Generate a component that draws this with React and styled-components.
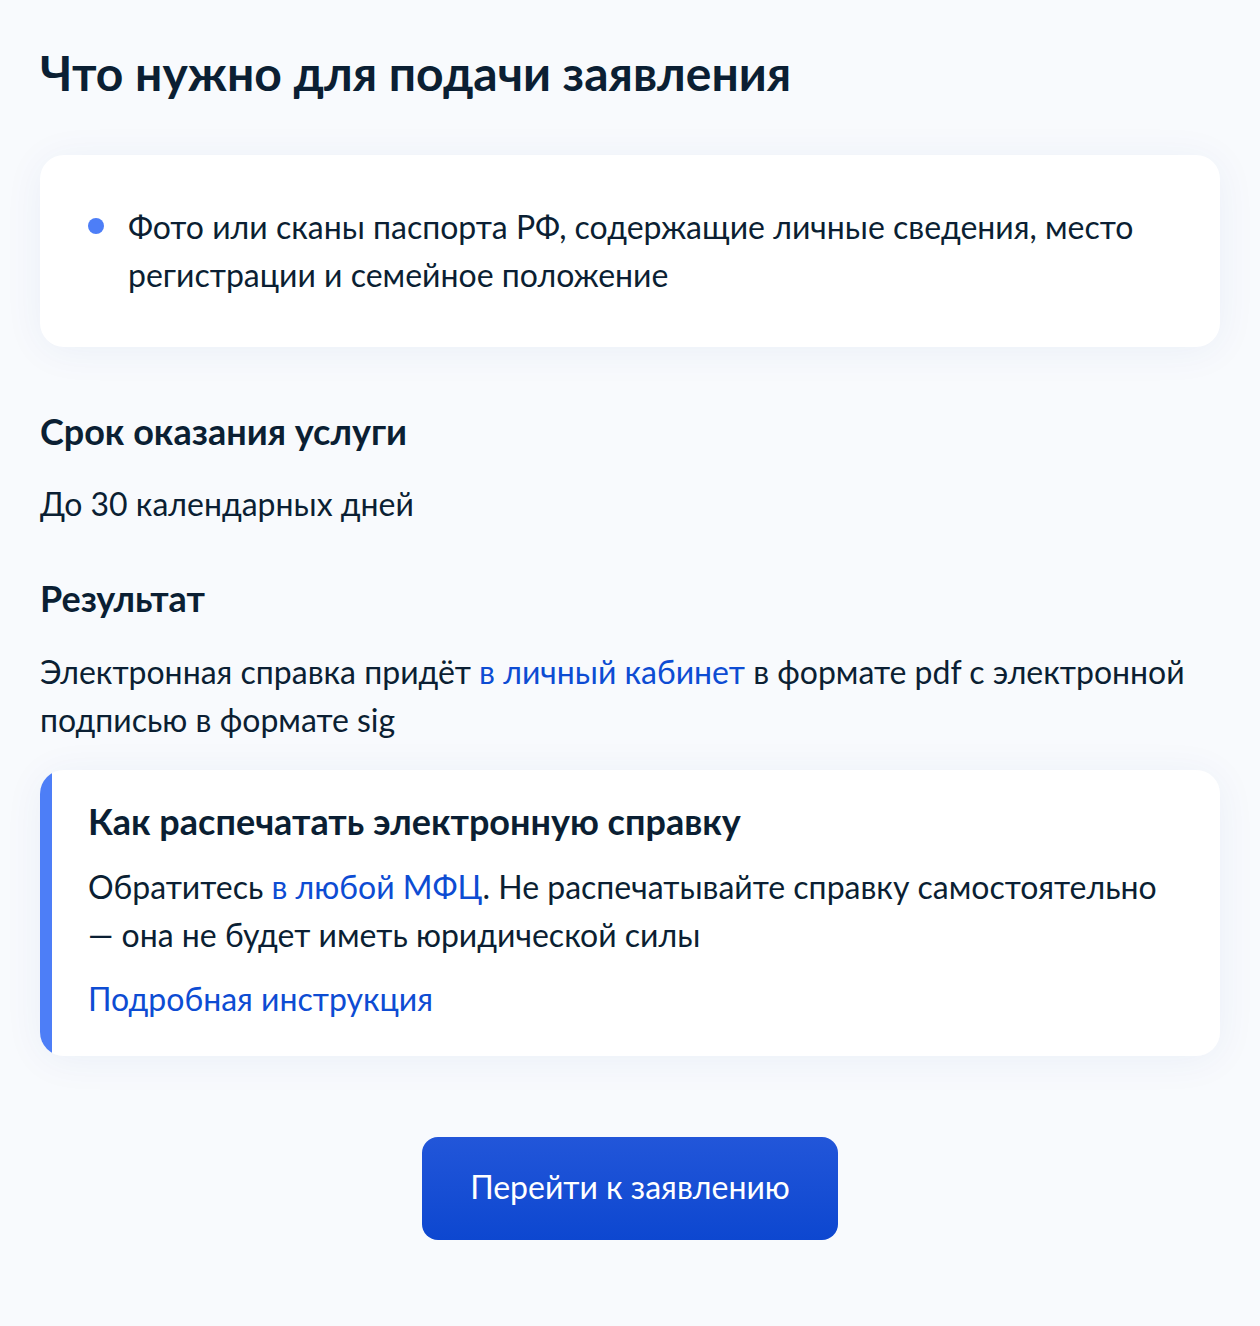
import styled, { createGlobalStyle } from "styled-components";

const GlobalStyle = createGlobalStyle`
  html, body {
    margin: 0;
    padding: 0;
    background: #f8fafd;
  }
  body {
    font-family: Lato, "Noto Sans", sans-serif;
    color: #0b1f33;
  }
`;

const Page = styled.main`
  width: 1260px;
  min-height: 1326px;
  box-sizing: border-box;
  padding: 45px 40px 86px;
  display: flex;
  flex-direction: column;
`;

const Title = styled.h1`
  margin: 0 0 54px;
  font-size: 48px;
  line-height: 56px;
  font-weight: 700;
`;

const Card = styled.section`
  background: #fff;
  border-radius: 24px;
  box-shadow: 0 4px 40px rgba(11, 64, 145, 0.06);
  padding: 48px;
`;

const List = styled.ul`
  margin: 0;
  padding: 0;
  list-style: none;
`;

const Item = styled.li`
  display: flex;
  gap: 24px;
  font-size: 32px;
  line-height: 48px;

  &::before {
    content: "";
    flex: 0 0 16px;
    height: 16px;
    margin-top: 15px;
    border-radius: 50%;
    background: #4d7ef7;
  }
`;

const Subtitle = styled.h2`
  margin: ${({ top }) => top}px 0 0;
  font-size: 36px;
  line-height: 40px;
  font-weight: 700;
`;

const Text = styled.p`
  margin: ${({ top }) => top}px 0 0;
  font-size: 32px;
  line-height: 48px;
`;

const Link = styled.a`
  color: #0d4cd3;
  text-decoration: none;
`;

const Note = styled.section`
  margin-top: 26px;
  border-radius: 24px;
  background: linear-gradient(to right, #4d7ef7 12px, #fff 12px);
  box-shadow: 0 4px 40px rgba(11, 64, 145, 0.06);
  padding: 30px 48px 33px;
`;

const NoteTitle = styled.h3`
  margin: 0 0 21px;
  font-size: 36px;
  line-height: 42px;
  font-weight: 700;
`;

const NoteLink = styled(Link)`
  display: block;
  margin-top: 16px;
  font-size: 32px;
  line-height: 48px;
`;

const Actions = styled.div`
  margin-top: 81px;
  display: flex;
  justify-content: center;
`;

const Button = styled.button`
  height: 103px;
  padding: 0 48px 4px;
  border: none;
  border-radius: 16px;
  background: linear-gradient(180deg, #2256d9 0%, #0d47d0 100%);
  color: #fff;
  font-family: Lato, "Noto Sans", sans-serif;
  font-size: 32px;
  cursor: pointer;
`;

export default function App() {
  return (
    <>
      <GlobalStyle />
      <Page>
        <Title>Что нужно для подачи заявления</Title>
        <Card>
          <List>
            <Item>
              Фото или сканы паспорта РФ, содержащие личные сведения, место
              регистрации и семейное положение
            </Item>
          </List>
        </Card>

        <Subtitle top={64}>Срок оказания услуги</Subtitle>
        <Text top={29}>До 30 календарных дней</Text>

        <Subtitle top={50}>Результат</Subtitle>
        <Text top={30}>
          Электронная справка придёт <Link href="#">в личный кабинет</Link> в
          формате pdf с электронной подписью в формате sig
        </Text>

        <Note>
          <NoteTitle>Как распечатать электронную справку</NoteTitle>
          <Text top={0}>
            Обратитесь <Link href="#">в любой МФЦ</Link>. Не распечатывайте
            справку самостоятельно — она не будет иметь юридической силы
          </Text>
          <NoteLink href="#">Подробная инструкция</NoteLink>
        </Note>

        <Actions>
          <Button>Перейти к заявлению</Button>
        </Actions>
      </Page>
    </>
  );
}
